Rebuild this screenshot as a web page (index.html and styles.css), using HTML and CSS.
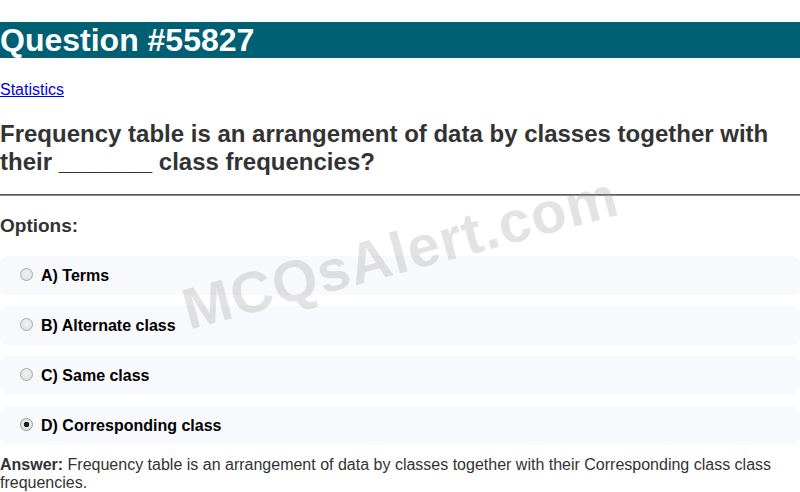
FILE: index.html
```
<!DOCTYPE html>
<html>
<head>
<meta charset="utf-8">
<link rel="stylesheet" href="styles.css">
</head>
<body>
<div class="page">
  <h1 class="title">Question #55827</h1>
  <p class="cat"><a href="#">Statistics</a></p>
  <h2 class="question">Frequency table is an arrangement of data by classes together with their _______ class frequencies?</h2>
  <hr class="rule">
  <h3 class="opts-head">Options:</h3>
  <div class="options">
    <label class="option"><input type="radio" name="q" disabled> A) Terms</label>
    <label class="option"><input type="radio" name="q" disabled> B) Alternate class</label>
    <label class="option"><input type="radio" name="q" disabled> C) Same class</label>
    <label class="option"><input type="radio" name="q" disabled checked> D) Corresponding class</label>
  </div>
  <p class="answer"><b>Answer:</b> Frequency table is an arrangement of data by classes together with their Corresponding class class frequencies.</p>
  <div class="watermark">MCQsAlert.com</div>
</div>
</body>
</html>
```
FILE: styles.css
```
html, body {
  margin: 0;
  padding: 0;
  background: #fff;
}
body {
  font-family: "Liberation Sans", Arial, sans-serif;
  color: #333;
  font-size: 16px;
}
.page {
  position: relative;
  overflow: hidden;
  min-height: 492px;
}
.title {
  margin: 22px 0 0;
  background: #006073;
  color: #fff;
  font-size: 32px;
  line-height: 36px;
  font-weight: bold;
}
.cat {
  margin: 23px 0 0;
  line-height: 18px;
}
.cat a {
  color: #0000ee;
}
.question {
  margin: 21px 0 0;
  font-size: 24px;
  line-height: 28px;
  font-weight: bold;
  color: #333;
}
.rule {
  margin: 18px 0 0;
  border: 0;
  border-top: 1px solid #5c5c5c;
  border-bottom: 1px solid #8a8a8a;
  height: 0;
}
.opts-head {
  margin: 19px 0 0;
  font-size: 19px;
  line-height: 22px;
  font-weight: bold;
}
.options {
  margin-top: 19px;
  display: flex;
  flex-direction: column;
  gap: 11px;
}
.option {
  display: flex;
  align-items: center;
  height: 39px;
  padding-left: 20px;
  background: #f8f9fc;
  border-radius: 8px;
  font-weight: bold;
  color: #000;
  font-size: 16px;
}
.option input {
  appearance: none;
  -webkit-appearance: none;
  box-sizing: border-box;
  margin: 0 8px 3px 0;
  width: 13px;
  height: 13px;
  border-radius: 50%;
  border: 1px solid #a9a9a9;
  background: radial-gradient(circle at 50% 40%, #f2f2f2, #dcdcdc);
}
.option input:checked {
  background: radial-gradient(circle, #1e1e1e 0 2.5px, #e4e4e4 3px);
  border-color: #9a9a9a;
}
.answer {
  margin: 11px 0 0;
  line-height: 18px;
}
.answer b {
  color: #333;
}
.watermark {
  position: absolute;
  left: 400px;
  top: 252px;
  transform: translate(-50%, -50%) rotate(-15deg);
  font-size: 58px;
  font-weight: bold;
  color: rgba(150, 150, 150, 0.27);
  white-space: nowrap;
  pointer-events: none;
  letter-spacing: 1px;
}
```
